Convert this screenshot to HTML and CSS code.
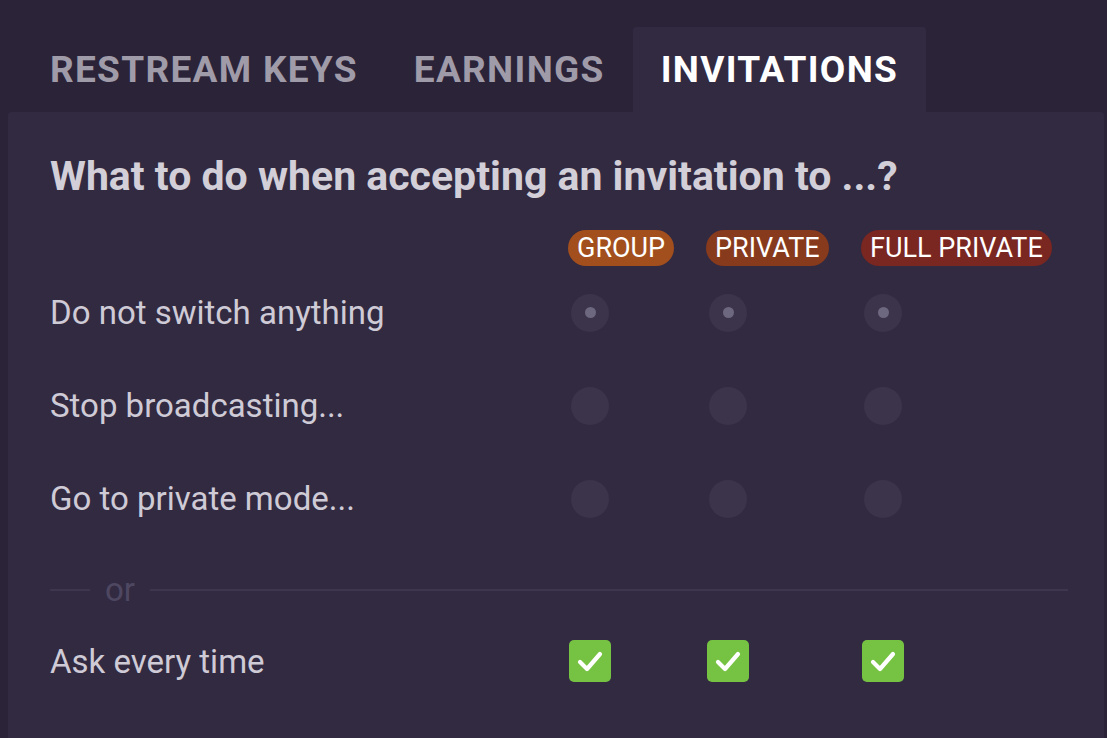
FILE: index.html
```html
<!DOCTYPE html>
<html>
<head>
<meta charset="utf-8">
<link rel="stylesheet" href="styles.css">
</head>
<body>
<div class="page">
  <nav class="tabs">
    <div class="tab">RESTREAM KEYS</div>
    <div class="tab">EARNINGS</div>
    <div class="tab active">INVITATIONS</div>
  </nav>
  <section class="panel">
    <h1 class="title">What to do when accepting an invitation to ...?</h1>
    <div class="grid">
      <div class="label head"></div>
      <div class="cell head"><span class="badge group">GROUP</span></div>
      <div class="cell head"><span class="badge private">PRIVATE</span></div>
      <div class="cell head"><span class="badge full">FULL PRIVATE</span></div>

      <div class="label row">Do not switch anything</div>
      <div class="cell row"><span class="radio on"></span></div>
      <div class="cell row"><span class="radio on"></span></div>
      <div class="cell row"><span class="radio on"></span></div>

      <div class="label row">Stop broadcasting...</div>
      <div class="cell row"><span class="radio"></span></div>
      <div class="cell row"><span class="radio"></span></div>
      <div class="cell row"><span class="radio"></span></div>

      <div class="label row">Go to private mode...</div>
      <div class="cell row"><span class="radio"></span></div>
      <div class="cell row"><span class="radio"></span></div>
      <div class="cell row"><span class="radio"></span></div>

      <div class="divider"><span class="line short"></span><span class="or">or</span><span class="line long"></span></div>

      <div class="label ask">Ask every time</div>
      <div class="cell ask"><span class="check"><svg viewBox="0 0 42 42" width="42" height="42"><path d="M11 22 L18 29 L31 14" fill="none" stroke="#fff" stroke-width="4.2" stroke-linecap="round" stroke-linejoin="round"/></svg></span></div>
      <div class="cell ask"><span class="check"><svg viewBox="0 0 42 42" width="42" height="42"><path d="M11 22 L18 29 L31 14" fill="none" stroke="#fff" stroke-width="4.2" stroke-linecap="round" stroke-linejoin="round"/></svg></span></div>
      <div class="cell ask"><span class="check"><svg viewBox="0 0 42 42" width="42" height="42"><path d="M11 22 L18 29 L31 14" fill="none" stroke="#fff" stroke-width="4.2" stroke-linecap="round" stroke-linejoin="round"/></svg></span></div>
    </div>
  </section>
</div>
</body>
</html>
```
FILE: styles.css
```css
html, body {
  margin: 0;
  padding: 0;
  background: #2b2439;
  font-family: Roboto, "Liberation Sans", sans-serif;
  height: 100%;
  overflow: hidden;
}
.page {
  padding: 27px 3px 0 8px;
}
.tabs {
  display: flex;
  padding-left: 14px;
  height: 85px;
}
.tab {
  padding: 0 28px;
  display: flex;
  align-items: center;
  font-weight: 700;
  font-size: 37px;
  letter-spacing: 1.3px;
  color: #a09ba9;
  border-radius: 4px 4px 0 0;
}
.tab.active {
  background: #322a41;
  color: #ffffff;
}
.panel {
  box-sizing: border-box;
  background: #322a41;
  padding: 38px 42px 0 42px;
  height: 626px;
  border-radius: 4px 4px 0 0;
}
.title {
  margin: 0;
  font-size: 41px;
  font-weight: 700;
  color: #d2cfd8;
  line-height: 52px;
}
.grid {
  display: grid;
  grid-template-columns: 486px 106px 123px 192px;
  column-gap: 32px;
  justify-content: start;
}
.label {
  font-size: 33px;
  color: #cfcbd6;
  display: flex;
  align-items: center;
}
.cell {
  display: flex;
  align-items: center;
}
.head {
  height: 36px;
  margin-top: 28px;
}
.row {
  height: 93px;
}
.ask {
  height: 82px;
}
.badge {
  display: inline-block;
  height: 36px;
  line-height: 36px;
  padding: 0 9px;
  border-radius: 18px;
  font-size: 27px;
  color: #ffffff;
  white-space: nowrap;
}
.badge.group { background: #a24f1d; }
.badge.private { background: #873a1c; }
.badge.full { background: #7a2621; }
.radio {
  width: 38px;
  height: 38px;
  border-radius: 50%;
  background: #3b344a;
  margin-left: 3px;
  display: flex;
  align-items: center;
  justify-content: center;
}
.radio.on::after {
  content: "";
  width: 11px;
  height: 11px;
  border-radius: 50%;
  background: #6e6780;
}
.divider {
  grid-column: 1 / -1;
  display: flex;
  align-items: center;
  height: 60px;
  margin-top: 15px;
}
.line {
  height: 2px;
  background: #3d364e;
  flex-shrink: 0;
}
.line.short { width: 40px; }
.line.long { width: 918px; }
.or {
  font-size: 33px;
  color: #4e4761;
  padding: 0 15px;
  line-height: 36px;
}
.check {
  width: 42px;
  height: 42px;
  border-radius: 5px;
  background: #76c243;
  margin-left: 1px;
  display: block;
}
.check svg { display: block; }
```
